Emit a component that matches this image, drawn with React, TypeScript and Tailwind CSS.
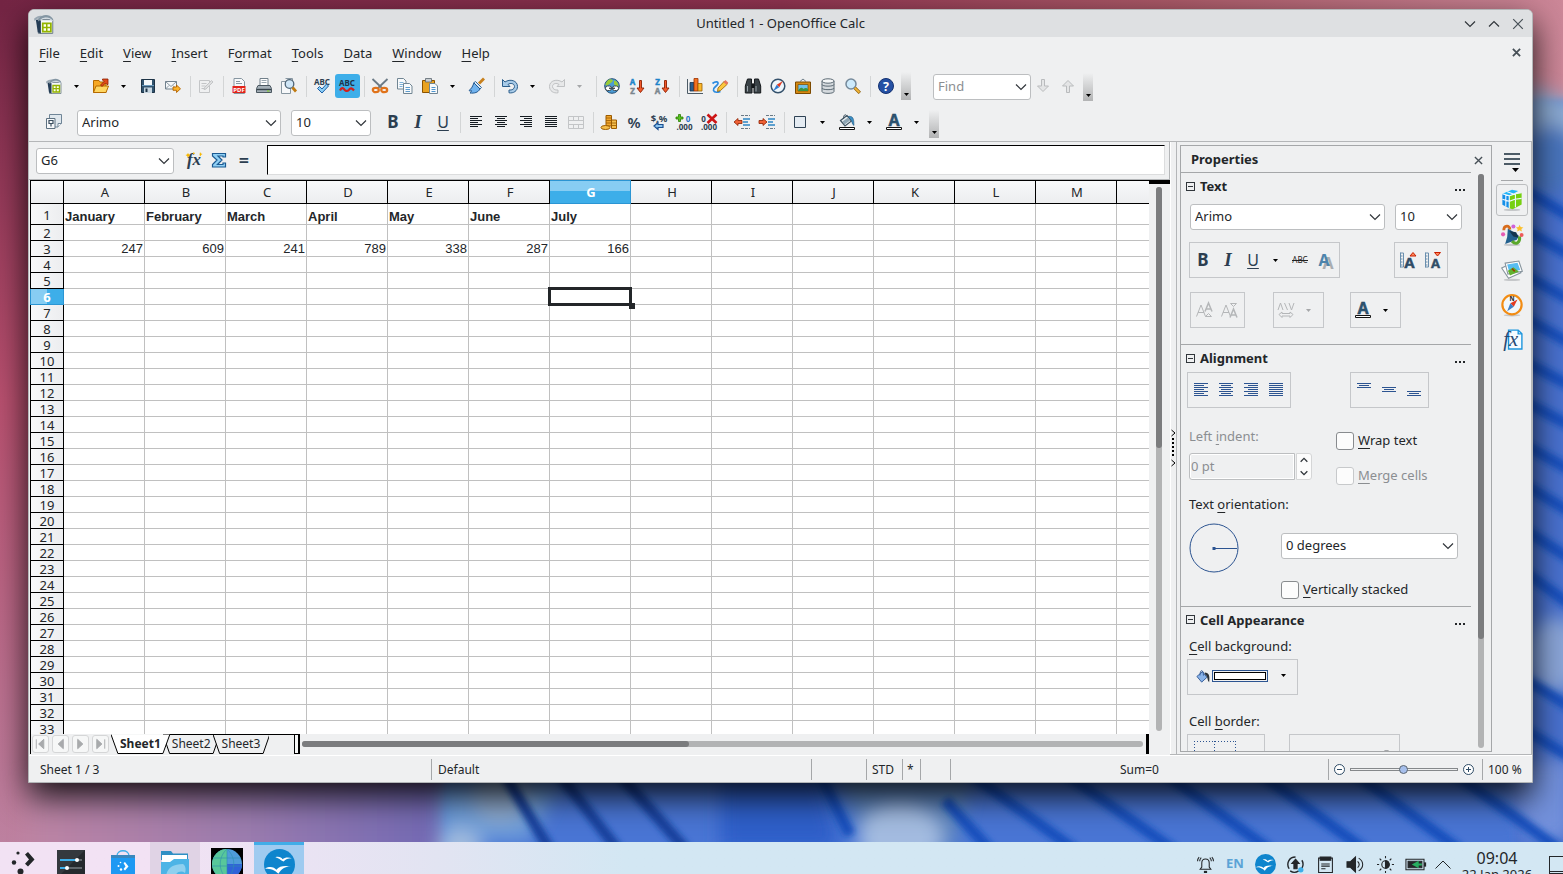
import React from "react";

const COLUMNS = ["A", "B", "C", "D", "E", "F", "G", "H", "I", "J", "K", "L", "M", ""];
const ROWS = Array.from({ length: 33 }, (_, i) => i + 1);

const MONTHS: Record<string, string> = {
  A: "January",
  B: "February",
  C: "March",
  D: "April",
  E: "May",
  F: "June",
  G: "July",
};

const TOTALS: Record<string, number> = { A: 247, B: 609, C: 241, D: 789, E: 338, F: 287, G: 166 };

const MENUS: [string, number][] = [
  ["File", 0],
  ["Edit", 0],
  ["View", 0],
  ["Insert", 0],
  ["Format", 1],
  ["Tools", 0],
  ["Data", 0],
  ["Window", 0],
  ["Help", 0],
];

const GREY = "#b9bbbd";
const INK = "#2c3e50";

const calcDoc = (
  <>
    <path d="M3.500 4.500h11.500v11H3.500z" fill="#f4f7f9" stroke="#6d7d88" strokeWidth=".8" />
    <path d="M1.500 4.500h4v11l-2.500-1z" fill="#243c55" />
    <path d="M0 3.800C3 1 6 .8 8.500 2.500 5 2 3 3.500.5 5.500z" fill="#9aa8b3" />
    <path d="M3 4C7-.2 12-.2 15 3.500v2C11 2.500 7 3 3.500 6z" fill="#8496a3" />
    <path d="M5 5C8 2.500 12 2.500 15 5.500" fill="none" stroke="#e5ecf1" strokeWidth=".8" />
    <path d="M7 7.500h6.500V14H7z" fill="#fdfff0" stroke="#94b400" strokeWidth="1.400" />
    <path d="M10.200 7.500V14M7 10.700h6.500" stroke="#94b400" strokeWidth="1.200" />
  </>
);

const bucket = (
  <>
    <path d="M1.500 6.500L8 1.500l4.500 5.500-6.500 5z" fill="#e7ecef" stroke="#3f5361" strokeWidth="1.200" />
    <path d="M4.500 5C4.500 0 7-.5 8 3" fill="none" stroke="#3f5361" />
    <path d="M9 2.500c5-1 6 2 6 9-2.500-1-1.500-5-4-6.500z" fill="#3b8fc6" stroke="#24506e" strokeWidth=".5" />
    <path d="M3.500 7.500l5.500-4 2 3-5.500 4z" fill="#8fa6b4" />
  </>
);

const ICONS: Record<string, React.ReactNode> = {
  calc: calcDoc,
  open: (
    <>
      <path d="M.5 2.500h5.500l1 1.500h6v10.500H.5z" fill="#f7a823" stroke="#b56a00" />
      <path d="M.5 14.500L3 8h12.500l-2.500 6.500z" fill="#ffd661" stroke="#b56a00" />
      <path d="M7.500 7l3.500-3.500L9.500 2V1H15v5.500h-1L12.500 5 9 8.500z" fill="#e04a1b" stroke="#8d1f00" strokeWidth=".8" />
    </>
  ),
  save: (
    <>
      <path d="M1.500 1.500h13v13h-13z" fill="#31536e" stroke="#1d3346" />
      <path d="M4 2h8v5H4z" fill="#f5f8fa" />
      <path d="M4 9.500h8V15H4z" fill="#c9d8e2" />
      <path d="M5.500 10.500h2V14h-2z" fill="#1d3346" />
      <path d="M2 7.500h12" stroke="#6c9bbd" />
    </>
  ),
  mail: (
    <>
      <path d="M.5 3.500h11v7.500H.5z" fill="#f4f7f9" stroke="#72828e" />
      <path d="M.5 3.500L6 8.500l5.500-5M.5 11L4 7.500M11.500 11L8 7.500" fill="none" stroke="#72828e" strokeWidth=".8" />
      <path d="M8 9h3.500V7l4 3.800-4 3.700v-2.200H8z" fill="#fdb52b" stroke="#b26200" strokeWidth=".9" />
    </>
  ),
  edit: (
    <g stroke="#c3c5c7" fill="none">
      <path d="M1.500 2.500h10v12h-10z" />
      <path d="M3.500 5.500h5M3.500 8h4M3.500 10.500h3" />
      <path d="M13.500 2.500l1.500 1.500-7 7-2 .5.500-2z" fill="#dedfe0" />
    </g>
  ),
  pdf: (
    <>
      <path d="M3 .5h7.500l3 3v12H3z" fill="#f7f9fa" stroke="#8796a1" />
      <path d="M5 3.500h4M5 5.500h6" stroke="#8796a1" />
      <path d="M1.500 8h13v7h-13z" fill="#e2231a" />
      <text x="8" y="13.800" fontSize="6" fontWeight="700" textAnchor="middle" fill="#fff">PDF</text>
    </>
  ),
  print: (
    <>
      <path d="M4 .5h8v7H4z" fill="#fff" stroke="#71808b" />
      <path d="M5.500 2.500h5M5.500 4.500h5" stroke="#9aa7b0" />
      <path d="M2 7.500h12l1.500 3v4H.5v-4z" fill="#a4afb7" stroke="#4b5861" />
      <path d="M1 11.500h14" stroke="#37434b" strokeWidth="1.400" />
      <path d="M11 13h2.500" stroke="#7ed321" />
    </>
  ),
  preview: (
    <>
      <path d="M.5 3.500h9v12h-9z" fill="#f6f8fa" stroke="#8796a1" />
      <path d="M4.500.5h7v5" fill="#fff" stroke="#8796a1" />
      <circle cx="8.500" cy="6" r="4.300" fill="#cfe6f7" stroke="#4f6577" strokeWidth="1.300" />
      <path d="M11.500 9.500l3.500 4" stroke="#c07a10" strokeWidth="2.800" />
    </>
  ),
  spell: (
    <>
      <text x="8" y="6.500" fontSize="8" fontWeight="700" textAnchor="middle" fill={INK}>ABC</text>
      <path d="M3.500 10.500l2-2 2.500 2.500 4.500-5 2 2L8 15z" fill="#8ccdf5" stroke="#1a5fa8" />
    </>
  ),
  autospell: (
    <>
      <text x="8" y="8" fontSize="8" fontWeight="700" textAnchor="middle" fill="#20344a">ABC</text>
      <path d="M1 12.500c1.500-3 3-3 4.500-.8 1.500 1.600 3 1.600 4.500 0 1.500-2.200 3-1.700 5 .8" fill="none" stroke="#d2201c" strokeWidth="2.200" />
    </>
  ),
  cut: (
    <>
      <path d="M.5 1l10 9.500M15.500 1l-10 9.500" stroke="#6b7a86" strokeWidth="1.800" />
      <ellipse cx="3.800" cy="12" rx="3" ry="2.200" fill="#f5f5f5" stroke="#e0731b" strokeWidth="2.200" />
      <ellipse cx="12.200" cy="12" rx="3" ry="2.200" fill="#f5f5f5" stroke="#e0731b" strokeWidth="2.200" />
    </>
  ),
  copy: (
    <g stroke="#708593" fill="#f8fafb">
      <path d="M.5.5h6l2.500 2.500v8H.5z" />
      <path d="M2.500 4.500h4M2.500 6.500h4M2.500 8.500h3" stroke="#7db1d8" />
      <path d="M6.500 5.500h6l2.500 2.500v7.500H6.500z" />
      <path d="M8.500 9.500h4.500M8.500 11.500h4.500M8.500 13.500h4.500" stroke="#5d9cce" />
    </g>
  ),
  paste: (
    <>
      <path d="M.5 2.500h12v12H.5z" fill="#e9a21f" stroke="#8a5200" />
      <path d="M3.500.5h6v3.500h-6z" fill="#c9ced2" stroke="#5b666e" strokeWidth=".8" />
      <path d="M7.500 5.500h5.500l2.500 2.500v7.500h-8z" fill="#f8fafb" stroke="#708593" />
      <path d="M9.500 9.500h4M9.500 11.500h4M9.500 13.500h4" stroke="#4e94cf" />
    </>
  ),
  brush: (
    <>
      <path d="M15 .5L10 5.500" stroke="#c8801d" strokeWidth="2.800" />
      <path d="M6.500 3.500l6 6-1.500 1.500-6.500-6z" fill="#dbe9f5" stroke="#31679c" />
      <path d="M5 5l6 6c-2 3.500-5.500 4.500-10 4 1-1 1.500-1.500 1.500-2.300-1.500.5-2.200.3-2.500-.2C3 10.500 3.500 8 5 5z" fill="#71b3ee" stroke="#21578f" />
    </>
  ),
  undo: (
    <path d="M.5 1.500L3 4C8 .5 15.500 2.500 15.500 8.500c0 4.500-4 7-8.500 6.300v-2.800c3 .4 5.500-1 5.500-3.500 0-3-4-4-6.500-2L8 8.500H.5z" fill="#a8cbe8" stroke="#2d5f8c" />
  ),
  redo: (
    <path d="M15.500 1.500L13 4C8 .5.500 2.500.5 8.500c0 4.500 4 7 8.500 6.300v-2.800c-3 .4-5.500-1-5.500-3.500 0-3 4-4 6.500-2L8 8.500h7.500z" fill="#e7e8e9" stroke="#bfc1c3" />
  ),
  link: (
    <>
      <circle cx="8" cy="8" r="7.300" fill="#4a9bd4" stroke="#245077" />
      <path d="M2.500 4c2-3.500 5-3 6-2S7 5 5.500 6 3 8 1.200 7zM10 2.500c3 0 4.500 3.500 4.500 5.500-2 1-3.500-1-4.500-2z" fill="#9acb36" />
      <rect x="1.500" y="8" width="6" height="4.500" rx="2" fill="#fff" stroke="#3e4c55" />
      <rect x="8.500" y="8" width="6" height="4.500" rx="2" fill="#fff" stroke="#3e4c55" />
      <path d="M5 10.300h6" stroke="#3e4c55" strokeWidth="1.400" />
    </>
  ),
  sortAsc: (
    <>
      <text x="3.500" y="6.500" fontSize="8" fontWeight="700" textAnchor="middle" fill="#1d84c9" stroke="#1d84c9" strokeWidth=".4">A</text>
      <text x="3.500" y="16" fontSize="8" fontWeight="700" textAnchor="middle" fill="#7a868e" stroke="#7a868e" strokeWidth=".4">Z</text>
      <path d="M10.500 2.500h2v7.500H15l-3.500 4.500L8 10h2.500z" fill="#f2592a" stroke="#8d1f00" strokeWidth=".9" />
    </>
  ),
  sortDesc: (
    <>
      <text x="3.500" y="6.500" fontSize="8" fontWeight="700" textAnchor="middle" fill="#1d84c9" stroke="#1d84c9" strokeWidth=".4">Z</text>
      <text x="3.500" y="16" fontSize="8" fontWeight="700" textAnchor="middle" fill="#7a868e" stroke="#7a868e" strokeWidth=".4">A</text>
      <path d="M10.500 2.500h2v7.500H15l-3.500 4.500L8 10h2.500z" fill="#f2592a" stroke="#8d1f00" strokeWidth=".9" />
    </>
  ),
  chart: (
    <>
      <path d="M.5 1v14.500H16" fill="none" stroke="#4c5b66" />
      <path d="M3 4.500h4V13H3z" fill="#2b5d8c" stroke="#17344f" strokeWidth=".8" />
      <path d="M7 .5h4V13H7z" fill="#f4711f" stroke="#9b3100" strokeWidth=".8" />
      <path d="M11 5.500h4V13h-4z" fill="#fbb72c" stroke="#9b6000" strokeWidth=".8" />
    </>
  ),
  draw: (
    <>
      <path d="M.5 5.500c3-2.500 7-2 5 1s-5 3-4 6 5 1.500 7 1" fill="none" stroke="#2c8be0" strokeWidth="1.700" />
      <path d="M12.500 3l3 3-7 6.500-3 1L6 10z" fill="#fcc63d" stroke="#946000" strokeWidth=".8" />
      <path d="M11.500 4L13.500 2l2.800 2.800-2 2z" fill="#e7745f" />
    </>
  ),
  find: (
    <>
      <path d="M2.500 1h4v4l.5 1v9H.3V8zM13.500 1h-4v4L9 6v9h6.700V8z" fill="#3a4247" stroke="#15191c" />
      <path d="M6.500 5.500h3v4.500h-3z" fill="#15191c" />
      <path d="M2.500 8v5.500M11 8v5.500" stroke="#9aa4aa" />
    </>
  ),
  navigator: (
    <>
      <circle cx="8" cy="8" r="6.800" fill="#eef6fc" stroke="#35516b" strokeWidth="1.500" />
      <path d="M12.800 3L9.300 9.300 6.700 6.700z" fill="#e33b22" />
      <path d="M3.200 13l3.500-6.300 2.600 2.600z" fill="#2f7bd0" />
    </>
  ),
  gallery: (
    <>
      <path d="M5 3.500L8 1l3 2.500" fill="none" stroke="#71808b" />
      <path d="M.5 4h15v11.500H.5z" fill="#d58a12" stroke="#7c4a00" />
      <path d="M3 6.500h10v6.500H3z" fill="#6fc1ea" stroke="#7c4a00" strokeWidth=".7" />
      <path d="M3 13c2-4.500 4.500-3.500 5.500-2 1.500-1.500 3.500-1 4.500 0v2z" fill="#3b9442" />
    </>
  ),
  database: (
    <g fill="#d5dade" stroke="#5c6a74">
      <path d="M2 3v10.500c0 2.500 12 2.500 12 0V3" />
      <ellipse cx="8" cy="3" rx="6" ry="2.200" fill="#f5f7f8" />
      <path d="M2 6.500c0 2.200 12 2.200 12 0M2 10c0 2.200 12 2.200 12 0" fill="none" />
    </g>
  ),
  zoom: (
    <>
      <circle cx="6" cy="6" r="5" fill="#cdeafb" stroke="#75899a" strokeWidth="1.500" />
      <path d="M9.800 9.800l5 5" stroke="#8a5a00" strokeWidth="3.200" />
      <path d="M9.800 9.800l4.700 4.700" stroke="#f3b63a" strokeWidth="1.800" />
    </>
  ),
  help: (
    <>
      <circle cx="8" cy="8" r="7.500" fill="#2450a4" stroke="#143170" />
      <text x="8" y="12.500" fontSize="12.500" fontWeight="700" textAnchor="middle" fill="#fff">?</text>
    </>
  ),
  findNext: <path d="M6.500 1.500h3V8h4L8 13.500 2.500 8h4z" fill="#e4e5e6" stroke={GREY} />,
  findPrev: <path d="M6.500 14.500h3V8h4L8 2.500 2.500 8h4z" fill="#e4e5e6" stroke={GREY} />,
  styles: (
    <>
      <path d="M3.500.5h12v9l-3.500 3.500h-8.500z" fill="#dfe7ed" stroke="#6f8597" />
      <path d="M12 13V9.500h3.500" fill="#fff" stroke="#6f8597" />
      <path d="M.5 4.500h8.500v10H.5z" fill="#f6f8fa" stroke="#5d7181" />
      <path d="M3 6.500h4v3H3zM5 9.500v3" fill="none" stroke="#3b4f5f" strokeWidth="1.200" />
    </>
  ),
  merge: (
    <g fill="none" stroke="#c3c5c7">
      <path d="M.5 2.500h15v12H.5zM.5 6.500h15M.5 10.500h15M5.500 2.500v4M10.500 2.500v4M5.500 10.500v4M10.500 10.500v4" />
    </g>
  ),
  currency: (
    <>
      <path d="M5 1.500h5.500V12H5z" fill="#f0a52c" stroke="#9b5b00" />
      <path d="M10.500 6h5v8.500h-5z" fill="#f6bf4c" stroke="#9b5b00" />
      <path d="M5 4h5.500M5 6.500h5.500M5 9h5.500M10.500 9h5M10.500 11.500h5" stroke="#9b5b00" strokeWidth=".8" />
      <ellipse cx="4.500" cy="13.500" rx="4.500" ry="2" fill="#f6bf4c" stroke="#9b5b00" />
    </>
  ),
  numberFormat: (
    <>
      <text x="8" y="7.500" fontSize="9.500" fontWeight="700" textAnchor="middle" fill={INK}>$,%</text>
      <path d="M3 12l4-3.500v2h5v3H7v2z" fill="#8cc4ef" stroke="#1a4f90" strokeWidth="1.200" />
    </>
  ),
  addDecimal: (
    <>
      <path d="M2.500.5h2V3H7v2H4.500v2.500h-2V5H0V3h2.500z" fill="#58c322" stroke="#2b7c00" strokeWidth=".8" />
      <text x="12" y="7.500" fontSize="8" fontWeight="700" textAnchor="middle" fill="#2874c8">0</text>
      <text x="8.500" y="16" fontSize="8" fontWeight="700" textAnchor="middle" fill={INK}>.000</text>
    </>
  ),
  removeDecimal: (
    <>
      <text x="2.500" y="7.500" fontSize="8" fontWeight="700" textAnchor="middle" fill={INK}>0</text>
      <text x="8" y="16" fontSize="8" fontWeight="700" textAnchor="middle" fill={INK}>.000</text>
      <path d="M6.500.5l9 8.500M15.500.5l-9 8.500" stroke="#cc1515" strokeWidth="2.600" />
    </>
  ),
  outdent: (
    <>
      <path d="M7 1.500h9M7 14.500h9" stroke="#6a7a86" strokeDasharray="3 1" />
      <path d="M9 5h7M9 8h5M9 11h7" stroke="#2d85c5" strokeWidth="1.600" />
      <path d="M0 8l4-3.500v2h4v3H4v2z" fill="#ef6236" stroke="#8d1f00" strokeWidth=".8" />
    </>
  ),
  indent: (
    <>
      <path d="M7 1.500h9M7 14.500h9" stroke="#6a7a86" strokeDasharray="3 1" />
      <path d="M9 5h7M9 8h5M9 11h7" stroke="#2d85c5" strokeWidth="1.600" />
      <path d="M8 8L4 4.500v2H0v3h4v2z" fill="#ef6236" stroke="#8d1f00" strokeWidth=".8" />
    </>
  ),
  borders: <path d="M2.500 2.500h11v11h-11z" fill="#e4ebf2" stroke="#2f4254" />,
  background: (
    <>
      {bucket}
      <path d="M.5 13.500h15v2H.5z" fill="#fff" stroke="#111" />
    </>
  ),
  fontColor: (
    <>
      <text x="8" y="11.500" fontSize="16" fontWeight="700" textAnchor="middle" fill="#2d5573" stroke="#1d3a52" strokeWidth=".4">A</text>
      <path d="M.5 13.500h15v2H.5z" fill="#fff" stroke="#111" />
    </>
  ),
  fx: (
    <>
      <text x="8" y="13" fontSize="17" fontStyle="italic" fontWeight="700" textAnchor="middle" fill={INK} fontFamily="Liberation Serif, serif">fx</text>
      <path d="M2 1l1 1.500L4.500 3 3 4l-1 1.500L1 4-.5 3 1 2.500zM7 0l1 1 1-.5-.5 1.500L7 2zM14 0l1 1.500 1.500.5-1.500 1-.5 1.500-1-1.500z" fill="#f7b800" />
    </>
  ),
  sum: <path d="M1.500 1.500h13v3.500H12V4H7l4 4-4.500 4.500h5.500V11h2.500v4h-13v-2.500L6 8 1.500 4z" fill="#8fd0f5" stroke="#1b5a92" strokeWidth="1.200" />,
  strike: (
    <>
      <text x="8" y="11" fontSize="8" textAnchor="middle" fill="#222">ABC</text>
      <path d="M0 8.500h16" stroke="#222" />
    </>
  ),
  grow: (
    <>
      <path d="M.5.500v15M.5 1h3v14h-3M1 4h1.500M1 7h1.500M1 10h1.500M1 13h1.500" fill="none" stroke="#6a8fae" />
      <text x="9.500" y="15.500" fontSize="15" fontWeight="700" textAnchor="middle" fill="#2f4c66" stroke="#2f4c66" strokeWidth=".4">A</text>
      <path d="M10 4l3-3.500L16 4z" fill="#ff8a5c" stroke="#c81e00" />
    </>
  ),
  shrink: (
    <>
      <path d="M.5.500v15M.5 1h3v14h-3M1 4h1.500M1 7h1.500M1 10h1.500M1 13h1.500" fill="none" stroke="#6a8fae" />
      <text x="10.500" y="15.500" fontSize="13" fontWeight="700" textAnchor="middle" fill="#2f4c66" stroke="#2f4c66" strokeWidth=".4">A</text>
      <path d="M9.500.5h6L12.500 4z" fill="#ff8a5c" stroke="#c81e00" />
    </>
  ),
  superscript: (
    <g fill="none" stroke="#b4b6b8">
      <path d="M.5 14.500L5 3l4.500 11.500M2 10.500h6" />
      <path d="M9 9.500L12.500 1 16 9.500M10 7h5" strokeWidth="1.500" />
      <path d="M9.500 14.500l3-3 3 3z" />
    </g>
  ),
  subscript: (
    <g fill="none" stroke="#b4b6b8">
      <path d="M.5 14.500L5 3l4.500 11.500M2 10.500h6" />
      <path d="M9 15.500L12.500 7 16 15.500M10 13h5" strokeWidth="1.500" />
      <path d="M9.500 1.500l3 3 3-3z" />
    </g>
  ),
  spacing: (
    <g fill="none" stroke="#b4b6b8">
      <path d="M0 8l2.500-7L5 8M6.500 1L9.500 8M11 1l2.500 7L16 1M1 12.500L4 10v1.500h8V10l3 2.500L12 15.500v-1.500H4v1.500z" />
    </g>
  ),
  bucketBlue: (
    <>
      <path d="M1 8.500L7.500 3l5 6.500-6 5.500z" fill="#8ab4ea" stroke="#2c5491" />
      <path d="M4.500 7.500c0-7.500 4-7.500 4 0" fill="none" stroke="#2c5491" />
      <path d="M10 4c5 0 6 4 5 11-2.500-2-1-7-5-9z" fill="#2a3138" />
    </>
  ),
  cubes: (
    <>
      <ellipse cx="8" cy="15.200" rx="6" ry=".8" fill="#c5c7c9" />
      <path d="M1 3.500L6 5v9l-5-2.500z" fill="#148fe8" />
      <path d="M1 3.500L8 .5l4.500 1L6 5z" fill="#22b5f7" />
      <path d="M6 5l4-1.500 5-.8v8.500l-6.500 3.500L6 14z" fill="#76d010" />
      <path d="M1 7.500L6 9l4-1.500 5-.7M6 5v9M10.500 3.300v10M1 3.500L6 5l4.500-1.500L15 2.700M4.500 2l4.500 1.700M3.500 4.300v8.400" fill="none" stroke="#eef7ff" strokeWidth=".8" />
    </>
  ),
  stylist: (
    <>
      <ellipse cx="8" cy="15.200" rx="6" ry=".8" fill="#c5c7c9" />
      <path d="M5 3l8 5.500-1.500 3-8.500 3 1.500-5z" fill="#22608e" />
      <path d="M6 5l5 1 2 4-4-1z" fill="#12344f" />
      <path d="M2 4.500c0-3.500 4.500-4 4.500-.5" fill="none" stroke="#d86c1c" strokeWidth="2" />
      <path d="M8 12.500c3 3 6 1 5.500-3.500" fill="none" stroke="#5aa82a" strokeWidth="2.200" />
      <circle cx="9" cy="1.800" r="1.500" fill="#cf62d8" />
      <path d="M13.500.5l.8 1.700 2 .3-1.500 1.200.4 1.800-1.700-.9-1.700.9.300-1.800-1.300-1.200 2-.3z" fill="#fbc02d" />
      <circle cx="1.500" cy="7.500" r="1.500" fill="#e65ab4" />
      <circle cx="15" cy="8" r="1.400" fill="#ee5a5a" />
    </>
  ),
  galleryTab: (
    <>
      <ellipse cx="8" cy="15.200" rx="6" ry=".8" fill="#c5c7c9" />
      <path d="M.5 6.500L10 2l4.500 8-9 4z" fill="#fff" stroke="#88959e" strokeWidth=".8" />
      <path d="M3 3l10-1.500L15.500 9 5 11z" fill="#fff" stroke="#88959e" strokeWidth=".8" />
      <path d="M4.500 4l7.500-1.200L14 8l-8 1.500z" fill="#57bdf2" />
      <path d="M5 8.500l4-2.500 4 3-6.500 3z" fill="#61b22f" />
      <path d="M8 7l2 2" stroke="#9b3c00" strokeWidth="1.200" />
    </>
  ),
  compassTab: (
    <>
      <ellipse cx="8" cy="15.500" rx="6" ry=".8" fill="#c5c7c9" />
      <circle cx="8" cy="7.800" r="7" fill="#f1f8fd" stroke="#f28c13" strokeWidth="1.600" />
      <text x="8" y="5" fontSize="4.500" fontWeight="700" textAnchor="middle" fill="#222">N</text>
      <path d="M12 4L9.300 9.200 6.800 6.700z" fill="#e33b22" />
      <path d="M4.500 12.500l2.300-5.800 2.500 2.500z" fill="#3f7fc4" />
    </>
  ),
  functionsTab: (
    <>
      <path d="M5.500.8h7l2.700 2.700v11H5.500z" fill="#f5fbff" stroke="#1b95dd" />
      <path d="M12.500.8v2.700h2.700" fill="none" stroke="#1b95dd" />
      <text x="7" y="12" fontSize="15" fontStyle="italic" textAnchor="middle" fill="#274a72" fontFamily="Liberation Serif, serif">fx</text>
    </>
  ),
};

const Icon = ({ name, className = "size-4" }: { name: string; className?: string }) => (
  <svg viewBox="0 0 16 16" className={`${className} shrink-0 overflow-visible`} aria-hidden="true">
    {ICONS[name]}
  </svg>
);

const Chevron = ({ className = "size-3" }: { className?: string }) => (
  <svg viewBox="0 0 12 12" className={className} fill="none" stroke="#31363b" strokeWidth="1.200" aria-hidden="true">
    <path d="M1 3.500l5 5 5-5" />
  </svg>
);

// Lines of text at alternating widths, for the alignment buttons
const Lines = ({ kind, large }: { kind: "left" | "center" | "right" | "justify"; large?: boolean }) => {
  const full = large ? 14 : 12;
  return (
    <svg
      viewBox={`0 0 ${full} ${full}`}
      className={large ? "size-3.5" : "size-3"}
      fill={large ? "#2c5491" : "#151c22"}
      aria-hidden="true"
    >
      {Array.from({ length: full / 2 }, (_, i) => {
        const w = kind === "justify" || i % 2 === 0 ? full : full - 4;
        const x = kind === "right" ? full - w : kind === "center" ? (full - w) / 2 : 0;
        return <rect key={i} x={x} y={i * 2} width={w} height="1" />;
      })}
    </svg>
  );
};

const ToolButton = ({ label, children, active }: { label: string; children: React.ReactNode; active?: boolean }) => (
  <button
    type="button"
    aria-label={label}
    className={`flex h-6 w-[25px] shrink-0 items-center justify-center rounded-[3px] pr-px ${active ? "bg-[#3daee9]" : ""}`}
  >
    {children}
  </button>
);

const Tool = ({ icon, active }: { icon: string; active?: boolean }) => (
  <ToolButton label={icon} active={active}>
    <Icon name={icon} />
  </ToolButton>
);

const Arrow = ({ disabled }: { disabled?: boolean }) => (
  <button type="button" aria-label="More options" className="flex h-6 w-[22px] shrink-0 items-center justify-center pr-[3px]">
    <svg viewBox="0 0 5 3" className="h-[3px] w-[5px]" fill={disabled ? "#a5a7a9" : "#000"} aria-hidden="true">
      <path d="M0 0h5L2.500 3z" />
    </svg>
  </button>
);

const Sep = () => <div className="mx-[3px] h-[21px] w-px shrink-0 border-r border-[#d3d5d6] pr-px" />;

const Grip = ({ className = "" }: { className?: string }) => (
  <button
    type="button"
    aria-label="Toolbar options"
    className={`flex h-7 w-2.5 shrink-0 items-end justify-center bg-linear-to-b from-[#eff0f1] to-[#b2b3b4] pb-1 ${className}`}
  >
    <svg viewBox="0 0 5 3" className="h-[3px] w-[5px]" aria-hidden="true">
      <path d="M0 0h5L2.500 3z" />
    </svg>
  </button>
);

const Combo = ({ id, label, value, className, muted }: { id?: string; label?: string; value: string; className: string; muted?: boolean }) => (
  <div className={`relative h-[26px] shrink-0 ${className}`}>
    <select
      id={id}
      aria-label={label}
      defaultValue={value}
      className={`h-full w-full appearance-none rounded-[3px] border border-[#bcbec0] bg-white px-1 ${muted ? "text-[#8b8e91]" : ""}`}
    >
      <option>{value}</option>
    </select>
    <Chevron className="pointer-events-none absolute top-[7px] right-1 size-3" />
  </div>
);

const Mnemonic = ({ text, at }: { text: string; at: number }) => (
  <span className="whitespace-pre">
    {text.slice(0, at)}
    <span className="underline underline-offset-[3px]">{text[at]}</span>
    {text.slice(at + 1)}
  </span>
);

const Close = ({ className }: { className: string }) => (
  <svg viewBox="0 0 10 10" className={className} fill="none" stroke="#475057" aria-hidden="true">
    <path d="M1 1l8 8M9 1L1 9" />
  </svg>
);

const Wallpaper = () => (
  <svg viewBox="0 0 1563 874" preserveAspectRatio="none" className="absolute inset-0 h-full w-full" aria-hidden="true">
    <defs>
      <linearGradient id="top" x1="0" x2="1">
        <stop offset="0" stopColor="#742544" />
        <stop offset=".5" stopColor="#8f3450" />
        <stop offset=".75" stopColor="#ab5a68" />
        <stop offset="1" stopColor="#cc8798" />
      </linearGradient>
      <linearGradient id="left" x1="0" x2="0" y1="0" y2="1">
        <stop offset="0" stopColor="#742544" />
        <stop offset=".45" stopColor="#b8506f" />
        <stop offset="1" stopColor="#bd84a3" />
      </linearGradient>
      <linearGradient id="bottom" x1="0" x2="1">
        <stop offset="0" stopColor="#bd84a3" />
        <stop offset=".5" stopColor="#9a7bae" />
        <stop offset="1" stopColor="#6b66b4" />
      </linearGradient>
      <filter id="soft">
        <feGaussianBlur stdDeviation="3" />
      </filter>
      <filter id="softer">
        <feGaussianBlur stdDeviation="9" />
      </filter>
    </defs>
    <rect width="1563" height="874" fill="url(#top)" />
    <rect y="10" width="60" height="864" fill="url(#left)" />
    <rect x="28" y="775" width="440" height="140" fill="url(#bottom)" filter="url(#softer)" />
    <rect x="445" y="740" width="1140" height="134" fill="#4a74d4" filter="url(#soft)" />
    <rect x="1515" y="100" width="70" height="774" fill="#4a71cf" filter="url(#soft)" />
    <g filter="url(#softer)">
      <path d="M440 780h120l-30 60h-90z" fill="#6f9fda" />
      <circle cx="500" cy="795" r="28" fill="#8ea9cc" />
      <circle cx="460" cy="850" r="22" fill="#9fb9dd" />
      <path d="M720 770h100l20 80h-120z" fill="#2f5ec9" />
      <path d="M835 760h140l-20 90h-90z" fill="#5d86c0" />
      <ellipse cx="900" cy="838" rx="42" ry="34" fill="#a3bbe0" />
      <path d="M1525 85l60 20v60l-60-30z" fill="#8caad2" />
      <circle cx="1550" cy="160" r="34" fill="#4a74bd" />
      <ellipse cx="1555" cy="655" rx="28" ry="38" fill="#8aa5d8" />
      <path d="M1500 760h70v80h-40z" fill="#7391dc" />
    </g>
    <g stroke="#1450bd" strokeWidth="11" filter="url(#soft)">
      <path d="M505 775l45 75M560 775l58 75M620 775l66 75" stroke="#12419c" />
      <path d="M820 775l30 60M945 800l45 50M965 770l110 80M1060 770l114 80M1160 770l110 80M1255 770l110 80M1350 770l110 80M1450 770l110 80" />
      <path d="M1525 190l50 30M1525 230l50 28M1525 275l50 28M1525 318l50 28M1525 362l50 26M1525 402l50 26M1525 445l50 28M1525 485l50 30M1525 530l50 32M1525 572l50 36M1525 680l50 30M1525 730l50 30" />
    </g>
  </svg>
);

const TitleBar = () => (
  <header className="flex h-[27px] items-center rounded-t-[5px] bg-[#dee0e2]">
    <div className="w-20 pl-[5px]">
      <Icon name="calc" className="size-5" />
    </div>
    <h1 className="flex-1 text-center">Untitled 1 - OpenOffice Calc</h1>
    <div className="flex w-20 items-center justify-end gap-3 pr-2">
      <button type="button" aria-label="Minimize"><Chevron /></button>
      <button type="button" aria-label="Maximize"><Chevron className="size-3 rotate-180" /></button>
      <button type="button" aria-label="Close"><Close className="size-3" /></button>
    </div>
  </header>
);

const MenuBar = () => (
  <nav className="flex h-8 items-center pt-0.5">
    {MENUS.map(([name, at]) => (
      <button key={name} type="button" className="px-2.5">
        <Mnemonic text={name} at={at} />
      </button>
    ))}
    <button type="button" aria-label="Close document" className="mr-[11px] ml-auto pb-1">
      <Close className="size-[9px] overflow-visible stroke-2" />
    </button>
  </nav>
);

const FontStyleButtons = () => (
  <>
    <ToolButton label="Bold"><b className="text-[17px] text-[#2c3e50]">B</b></ToolButton>
    <ToolButton label="Italic"><i className="font-['Liberation_Serif',serif] text-[19px] font-bold text-[#2c3e50]">I</i></ToolButton>
    <ToolButton label="Underline"><u className="text-base text-[#2c3e50] underline-offset-2">U</u></ToolButton>
  </>
);

const Toolbars = () => (
  <div className="border-b border-[#b4b6b8]">
    <div className="flex h-[34px] items-center pl-[13px]">
      <Tool icon="calc" />
      <Arrow />
      <Tool icon="open" />
      <Arrow />
      <Tool icon="save" />
      <Tool icon="mail" />
      <Sep />
      <Tool icon="edit" />
      <Sep />
      <Tool icon="pdf" />
      <Tool icon="print" />
      <Tool icon="preview" />
      <Sep />
      <Tool icon="spell" />
      <Tool icon="autospell" active />
      <Sep />
      <Tool icon="cut" />
      <Tool icon="copy" />
      <Tool icon="paste" />
      <Arrow />
      <Tool icon="brush" />
      <Sep />
      <Tool icon="undo" />
      <Arrow />
      <Tool icon="redo" />
      <Arrow disabled />
      <Sep />
      <Tool icon="link" />
      <Tool icon="sortAsc" />
      <Tool icon="sortDesc" />
      <Sep />
      <Tool icon="chart" />
      <Tool icon="draw" />
      <Sep />
      <Tool icon="find" />
      <Tool icon="navigator" />
      <Tool icon="gallery" />
      <Tool icon="database" />
      <Tool icon="zoom" />
      <Sep />
      <Tool icon="help" />
      <Grip className="ml-0.5" />
      <Combo label="Find text" value="Find" className="mt-0.5 ml-[22px] w-[98px]" muted />
      <Tool icon="findNext" />
      <Tool icon="findPrev" />
      <Grip className="mt-0.5 ml-0.5" />
    </div>
    <div className="flex h-[38px] items-center pl-[13px]">
      <Tool icon="styles" />
      <Combo label="Font name" value="Arimo" className="mt-0.5 mr-2.5 ml-2.5 w-[204px]" />
      <Combo label="Font size" value="10" className="mt-0.5 mr-2.5 w-20" />
      <FontStyleButtons />
      <Sep />
      <ToolButton label="Align left"><Lines kind="left" /></ToolButton>
      <ToolButton label="Center"><Lines kind="center" /></ToolButton>
      <ToolButton label="Align right"><Lines kind="right" /></ToolButton>
      <ToolButton label="Justify"><Lines kind="justify" /></ToolButton>
      <Tool icon="merge" />
      <Sep />
      <Tool icon="currency" />
      <ToolButton label="Percent"><span className="text-[15px] font-semibold text-[#2c3e50]">%</span></ToolButton>
      <Tool icon="numberFormat" />
      <Tool icon="addDecimal" />
      <Tool icon="removeDecimal" />
      <Sep />
      <Tool icon="outdent" />
      <Tool icon="indent" />
      <Sep />
      <Tool icon="borders" />
      <Arrow />
      <Tool icon="background" />
      <Arrow />
      <Tool icon="fontColor" />
      <Arrow />
      <Grip className="mt-1" />
    </div>
  </div>
);

const FormulaBar = () => (
  <div className="flex h-[38px] items-center border-r border-b border-[#b4b6b8] pb-px pl-[7px]">
    <Combo label="Name box" value="G6" className="mt-0.5 mr-2 w-[138px]" />
    <Tool icon="fx" />
    <Tool icon="sum" />
    <ToolButton label="Function"><span className="text-lg font-semibold text-[#2c3e50]">=</span></ToolButton>
    <input
      aria-label="Formula"
      className="mr-1 ml-2.5 h-[30px] min-w-0 flex-1 border-t border-r border-b border-l border-t-black border-r-[#dcddde] border-b-[#dcddde] border-l-black bg-white px-1"
    />
  </div>
);

const SheetGrid = () => (
  <div className="min-h-0 min-w-0 flex-1 overflow-hidden bg-white">
    <table className="w-max table-fixed border-separate border-spacing-0">
      <colgroup>
        <col className="w-[34px]" />
        {COLUMNS.map((c) => <col key={c} className="w-[81px]" />)}
      </colgroup>
      <thead>
        <tr className="h-6">
          <td className="w-[34px] border border-black bg-linear-to-b from-[#f8f9fa] to-[#ecedef] p-0" />
          {COLUMNS.map((c) => (
            <th
              key={c}
              scope="col"
              className={
                c === "G"
                  ? "w-[81px] border-y border-r border-y-[#2b95d3] border-r-[#2b95d3] bg-linear-to-b from-[#87cdf3] from-45% to-[#3daee9] to-45% bg-origin-border p-0 pl-0.5 leading-[18px] font-bold text-white"
                  : "w-[81px] border-y border-r border-black bg-linear-to-b from-[#f8f9fa] to-[#ecedef] p-0 pl-0.5 leading-[18px] font-normal"
              }
            >
              {c}
            </th>
          ))}
        </tr>
      </thead>
      <tbody>
        {ROWS.map((r) => (
          <tr key={r} className={r === 1 ? "h-[21px]" : "h-4"}>
            <th
              scope="row"
              className={
                r === 6
                  ? "border-x border-b border-x-[#2b95d3] border-b-[#2b95d3] bg-linear-to-r from-[#87cdf3] from-50% to-[#3daee9] to-50% p-0 pt-0.5 leading-[13px] font-bold text-white"
                  : "border-x border-b border-black bg-linear-to-r from-[#f8f9fa] to-[#ecedef] p-0 pt-0.5 leading-[13px] font-normal"
              }
            >
              {r}
            </th>
            {COLUMNS.map((c) => (
              <td
                key={c}
                className="relative border-r border-b border-[#c0c0c0] p-0 px-px align-bottom font-['Liberation_Sans',Arial,sans-serif] leading-[15px]"
              >
                {r === 1 && <b>{MONTHS[c]}</b>}
                {r === 3 && <div className="text-right">{TOTALS[c]}</div>}
                {r === 6 && c === "G" && (
                  <div className="absolute -inset-0.5 z-10 border-3 border-[#232629]">
                    <div className="absolute -right-1.5 -bottom-1.5 size-1.5 bg-[#232629]" />
                  </div>
                )}
              </td>
            ))}
          </tr>
        ))}
      </tbody>
    </table>
  </div>
);

const NAV_PATHS = [
  "M3.500 3v10M11.500 3v10L6 8z",
  "M11 3v10L5.500 8z",
  "M5 3v10l5.500-5z",
  "M4 3v10l5.500-5zM12.500 3v10",
];

const SheetTab = ({ name, active }: { name: string; active?: boolean }) => (
  <button type="button" className={`relative -ml-[7px] h-5 shrink-0 px-[9px] text-xs ${active ? "z-10 font-bold" : ""}`}>
    <svg viewBox="0 0 60 20" preserveAspectRatio="none" className="absolute inset-0 h-full w-full" aria-hidden="true">
      <path
        d="M0 .5l7 19h46l7-19"
        fill={active ? "#fff" : "#eff0f1"}
        stroke="#000"
        vectorEffect="non-scaling-stroke"
      />
      {!active && <path d="M0 .5h60" stroke="#000" vectorEffect="non-scaling-stroke" />}
    </svg>
    <span className="relative">{name}</span>
  </button>
);

const TabRow = () => (
  <div className="flex h-[21px] items-start bg-[#eff0f1]">
    <div className="flex h-5 items-center gap-[3px] border-l border-black pl-px">
      {NAV_PATHS.map((d) => (
        <button key={d} type="button" aria-label="Scroll sheets" className="h-[18px] w-[17px] rounded-[3px] border border-[#d5d6d7] bg-[#f6f7f7]">
          <svg viewBox="0 0 16 16" className="size-full" fill="#a8aaac" stroke="#a8aaac" aria-hidden="true">
            <path d={d} />
          </svg>
        </button>
      ))}
    </div>
    <div className="flex pl-[9px]">
      <SheetTab name="Sheet1" active />
      <SheetTab name="Sheet2" />
      <SheetTab name="Sheet3" />
    </div>
    <div className="h-5 w-[25px] border-t border-black" />
    <div className="h-5 w-1.5 border border-r-2 border-black bg-[#f6f7f7]" />
    <div className="flex h-5 flex-1 items-center pr-[3px] pl-0.5">
      <div className="h-1.5 flex-1 rounded-full bg-[#b2b3b4]">
        <div className="h-full w-[46%] rounded-full bg-[#7b7c7e]" />
      </div>
    </div>
    <div className="h-5 w-[3px] bg-black" />
  </div>
);

const Sheet = () => (
  <main className="flex min-w-0 flex-1 flex-col">
    <FormulaBar />
    <div className="flex min-h-0 flex-1 pl-px">
      <div className="flex min-w-0 flex-1 flex-col">
        <SheetGrid />
        <TabRow />
      </div>
      <div className="flex w-[21px] shrink-0 flex-col items-center border-t-4 border-black pt-[3px] pr-px pb-6">
        <div className="w-1.5 flex-1 rounded-full bg-[#b2b3b4]">
          <div className="h-[48%] rounded-full bg-[#7b7c7e]" />
        </div>
      </div>
    </div>
  </main>
);

const Section = ({ title, children }: { title: string; children: React.ReactNode }) => (
  <section className="border-t border-[#a5a7a9]">
    <div className="flex h-[26px] items-center pr-1.5 pl-[5px]">
      <button type="button" aria-label={`Collapse ${title}`} className="flex size-[9px] items-center justify-center border border-[#31363b]">
        <span className="h-px w-[5px] bg-[#31363b]" />
      </button>
      <h3 className="ml-[5px] pt-0.5 font-bold">{title}</h3>
      <button type="button" aria-label={`More ${title} options`} className="mt-2 ml-auto flex gap-0.5">
        <span className="size-0.5 bg-[#232629]" />
        <span className="size-0.5 bg-[#232629]" />
        <span className="size-0.5 bg-[#232629]" />
      </button>
    </div>
    {children}
  </section>
);

const Group = ({ children, className = "" }: { children: React.ReactNode; className?: string }) => (
  <div className={`flex h-9 items-center border border-[#c5c7ca] ${className}`}>{children}</div>
);

const Check = ({ id, text, disabled }: { id: string; text: string; disabled?: boolean }) => (
  <div className="flex h-5 items-center gap-1">
    <input
      id={id}
      type="checkbox"
      disabled={disabled}
      className="size-[18px] appearance-none rounded-[3px] border border-[#888b8e] bg-[#fcfcfc] disabled:border-[#c7c9cb]"
    />
    <label htmlFor={id} className={disabled ? "text-[#8b8e91]" : ""}>
      <Mnemonic text={text} at={0} />
    </label>
  </div>
);

const VAlign = ({ y }: { y: number }) => (
  <svg viewBox="0 0 14 14" className="size-3.5" fill="#2c5491" aria-hidden="true">
    <rect x="0" y={y} width="14" height="1" />
    <rect x="2" y={y + 2} width="10" height="1" />
    <rect x="0" y={y + 4} width="14" height="1" />
  </svg>
);

const Properties = () => (
  <div className="flex min-w-0 flex-1 flex-col border border-[#a5a7a9]">
    <div className="flex h-[26px] shrink-0 items-center justify-between pt-0.5 pr-2 pl-2.5">
      <h2 className="font-bold">Properties</h2>
      <button type="button" aria-label="Close sidebar" className="pt-px">
        <Close className="size-[9px] overflow-visible stroke-[1.500px]" />
      </button>
    </div>
    <div className="flex min-h-0 flex-1">
      <div className="min-w-0 flex-1 overflow-hidden">
        <Section title="Text">
          <div className="flex gap-2.5 pt-[5px] pl-[9px]">
            <Combo label="Sidebar font name" value="Arimo" className="w-[195px]" />
            <Combo label="Sidebar font size" value="10" className="w-[67px]" />
          </div>
          <div className="flex gap-[54px] pt-3 pl-2">
            <Group className="w-[151px] pl-px">
              <FontStyleButtons />
              <Arrow />
              <Tool icon="strike" />
              <ToolButton label="Shadow">
                <span className="pr-0.5 text-base font-bold text-[#4d84ab] [text-shadow:4px_3px_0_#a9adb1]">A</span>
              </ToolButton>
            </Group>
            <Group className="w-[54px] justify-center">
              <Tool icon="grow" />
              <Tool icon="shrink" />
            </Group>
          </div>
          <div className="flex pt-3.5 pb-4 pl-[9px]">
            <Group className="mr-7 w-[55px] pl-px">
              <Tool icon="superscript" />
              <Tool icon="subscript" />
            </Group>
            <Group className="mr-[26px] w-[51px]">
              <Tool icon="spacing" />
              <Arrow disabled />
            </Group>
            <Group className="w-[51px]">
              <Tool icon="fontColor" />
              <Arrow />
            </Group>
          </div>
        </Section>
        <Section title="Alignment">
          <div className="flex gap-[59px] pt-px pl-1.5">
            <Group className="w-[104px] justify-center">
              <ToolButton label="Align left"><Lines kind="left" large /></ToolButton>
              <ToolButton label="Center"><Lines kind="center" large /></ToolButton>
              <ToolButton label="Align right"><Lines kind="right" large /></ToolButton>
              <ToolButton label="Justify"><Lines kind="justify" large /></ToolButton>
            </Group>
            <Group className="w-[79px] justify-center">
              <ToolButton label="Align top"><VAlign y={0} /></ToolButton>
              <ToolButton label="Align middle"><VAlign y={4} /></ToolButton>
              <ToolButton label="Align bottom"><VAlign y={8} /></ToolButton>
            </Group>
          </div>
          <div className="flex gap-6 pt-[18px] pl-2">
            <div>
              <label htmlFor="indent" className="block leading-5 text-[#8b8e91]">
                <Mnemonic text="Left indent:" at={5} />
              </label>
              <div className="mt-[7px] flex h-[27px] gap-px">
                <input
                  id="indent"
                  defaultValue="0 pt"
                  disabled
                  className="w-[106px] rounded-l-[3px] border border-[#bcbec0] bg-[#eff0f1] px-px text-[#8b8e91] ring-1 ring-white ring-inset"
                />
                <div className="flex w-4 flex-col items-center justify-around rounded-r-[3px] border border-[#d5d6d7] bg-[#fcfcfc]">
                  <button type="button" aria-label="Increase"><Chevron className="size-2 rotate-180 stroke-2" /></button>
                  <button type="button" aria-label="Decrease"><Chevron className="size-2 stroke-2" /></button>
                </div>
              </div>
            </div>
            <div className="flex flex-col gap-[15px] pt-[5px]">
              <Check id="wrap" text="Wrap text" />
              <Check id="merge" text="Merge cells" disabled />
            </div>
          </div>
          <div className="pt-2 pb-1.5 pl-2">
            <label htmlFor="orientation" className="leading-5">
              <Mnemonic text="Text orientation:" at={5} />
            </label>
            <div className="flex gap-[42px]">
              <svg viewBox="0 0 50 50" className="mt-2 size-[50px]" fill="none" stroke="#2c5491" aria-hidden="true">
                <circle cx="25" cy="25" r="24" />
                <path d="M25 25.500h23" />
                <path d="M23.500 24h3v3h-3z" fill="#2c5491" stroke="none" />
              </svg>
              <div className="pt-[18px]">
                <Combo id="orientation" value="0 degrees" className="w-[177px]" />
                <div className="pt-[21px]">
                  <Check id="stacked" text="Vertically stacked" />
                </div>
              </div>
            </div>
          </div>
        </Section>
        <Section title="Cell Appearance">
          <div className="pt-[3px] pl-2 leading-5">
            <Mnemonic text="Cell background:" at={0} />
          </div>
          <div className="pt-[3px] pl-1.5">
            <Group className="w-[111px] pb-0.5 pl-2">
              <button type="button" aria-label="Cell background" className="flex items-center">
                <Icon name="bucketBlue" className="size-3.5" />
                <span className="ml-0.5 h-3 w-14 border border-[#2c5491] p-px">
                  <span className="block h-full border border-black bg-white" />
                </span>
              </button>
              <div className="ml-1.5"><Arrow /></div>
            </Group>
          </div>
          <div className="pt-4 pl-2 leading-5">
            <Mnemonic text="Cell border:" at={5} />
          </div>
          <div className="flex gap-6 pt-[3px] pl-1.5">
            <Group className="w-[78px] pl-1.5">
              <svg viewBox="0 0 42 22" className="h-[22px] w-[42px]" fill="none" stroke="#2c5491" strokeDasharray="1 2" aria-hidden="true">
                <path d="M0 .5h42M.5 0v22M20.500 0v22M41.500 0v22" />
              </svg>
            </Group>
            <Group className="w-[111px] justify-end">
              <Arrow disabled />
            </Group>
          </div>
        </Section>
      </div>
      <div className="flex w-5 shrink-0 flex-col items-center pt-0.5 pb-[3px]">
        <div className="w-1.5 flex-1 rounded-full bg-[#b2b3b4]">
          <div className="h-[81%] rounded-full bg-[#7b7c7e]" />
        </div>
      </div>
    </div>
  </div>
);

const Sidebar = () => (
  <aside className="flex w-[362px] shrink-0 border-b border-[#b4b6b8]">
    <div className="flex w-1.5 items-center justify-center border-l border-white">
      <svg viewBox="0 0 5 38" className="h-[38px] w-[5px]" fill="none" stroke="#000" aria-hidden="true">
        <path d="M.5 1l3.500 3-3.500 3M.5 31L4 34l-3.500 3" />
        <path d="M2 9v20" strokeWidth="2" strokeDasharray="2 2" />
      </svg>
    </div>
    <div className="flex min-w-0 flex-1 border-x border-[#b4b6b8] pt-[3px] pb-0.5 pl-[3px]">
      <Properties />
      <div className="flex w-[39px] shrink-0 flex-col items-center pt-2">
        <button type="button" aria-label="Sidebar settings" className="flex h-5 w-4 flex-col gap-[3px]">
          <span className="h-0.5 w-full bg-[#4c5b66]" />
          <span className="h-0.5 w-full bg-[#4c5b66]" />
          <span className="h-0.5 w-full bg-[#4c5b66]" />
          <svg viewBox="0 0 7 4" className="ml-2 h-1 w-[7px]" aria-hidden="true"><path d="M0 0h7L3.500 4z" /></svg>
        </button>
        <div className="mt-[7px] mb-[3px] h-px w-[22px] bg-[#a5a7a9]" />
        <button type="button" aria-label="Properties" className="flex h-8 w-8 items-center justify-center rounded-[3px] border border-[#bcbec0]">
          <Icon name="cubes" className="size-[22px]" />
        </button>
        {["stylist", "galleryTab", "compassTab", "functionsTab"].map((name) => (
          <button key={name} type="button" aria-label={name} className="mt-[3px] flex h-8 w-8 items-center justify-center">
            <Icon name={name} className="size-[22px]" />
          </button>
        ))}
      </div>
    </div>
  </aside>
);

const StatusBar = () => (
  <footer className="flex h-[27px] shrink-0 items-center border-t border-white pt-px text-xs [&>div]:flex [&>div]:h-[21px] [&>div]:items-center [&>div+div]:border-l [&>div+div]:border-[#a5a7a9]">
    <div className="w-[402px] pl-[11px]">Sheet 1 / 3</div>
    <div className="w-[380px] pl-1.5">Default</div>
    <div className="w-[55px]" />
    <div className="w-9 pl-[5px]">STD</div>
    <div className="w-[18px] pl-1">*</div>
    <div className="w-[30px]" />
    <div className="flex-1 justify-center">Sum=0</div>
    <div className="w-[154px] gap-[5px] pl-[5px]">
      <button type="button" aria-label="Zoom out">
        <svg viewBox="0 0 11 11" className="size-[11px]" fill="#fff" stroke="#2f4c66" aria-hidden="true">
          <circle cx="5.500" cy="5.500" r="5" />
          <path d="M3 5.500h5" />
        </svg>
      </button>
      <input
        type="range"
        aria-label="Zoom"
        defaultValue={49}
        className="h-[3px] w-[108px] appearance-none border border-[#85888b] bg-[#eff0f1] [&::-webkit-slider-thumb]:size-[9px] [&::-webkit-slider-thumb]:appearance-none [&::-webkit-slider-thumb]:rounded-full [&::-webkit-slider-thumb]:border [&::-webkit-slider-thumb]:border-[#5c6670] [&::-webkit-slider-thumb]:bg-[#a6bfec]"
      />
      <button type="button" aria-label="Zoom in">
        <svg viewBox="0 0 11 11" className="size-[11px]" fill="#fff" stroke="#2f4c66" aria-hidden="true">
          <circle cx="5.500" cy="5.500" r="5" />
          <path d="M3 5.500h5M5.500 3v5" />
        </svg>
      </button>
    </div>
    <div className="w-[50px] pl-[5px] whitespace-nowrap">100 %</div>
  </footer>
);

const Gulls = ({ className }: { className: string }) => (
  <svg viewBox="0 0 30 30" className={className} aria-hidden="true">
    <circle cx="15" cy="15" r="15" fill="#0e85cd" />
    <path d="M11 8c3-1 6 0 7 2 2-2 6-2 9-1-4 0-6 1-8 3-3-1-4-3-8-4z" fill="#fff" />
    <path d="M1 19c5-3 9-1 11 1 3-4 9-4 14-3-6 0-9 2-12 7-4-4-7-5-13-5z" fill="#fff" />
  </svg>
);

const Tray = ({ label, children }: { label: string; children: React.ReactNode }) => (
  <button type="button" aria-label={label} className="flex h-11 w-[30px] items-center justify-center">
    <svg viewBox="0 0 16 16" className="size-[17px] overflow-visible" fill="none" stroke="#232629" aria-hidden="true">
      {children}
    </svg>
  </button>
);

const Taskbar = () => (
  <div className="relative flex h-8 shrink-0 items-start overflow-hidden bg-linear-to-r from-[#f2e2f4] from-10% via-[#e2e4f2] via-28% to-[#d3e7f3] to-40%">
    <button type="button" aria-label="Application launcher" className="flex h-10 w-[45px] items-center justify-center">
      <svg viewBox="0 0 24 24" className="size-6" fill="#232629" aria-hidden="true">
        <circle cx="7" cy="3" r="1.600" />
        <circle cx="3" cy="12.500" r="2.200" />
        <circle cx="9.500" cy="21.500" r="3" />
        <path d="M14 4.500l3-2.500 6.500 7.500-6.500 7-3-2.700L18 9.500z" />
      </svg>
    </button>
    <button type="button" aria-label="System settings" className="flex h-11 w-[52px] items-center justify-center">
      <svg viewBox="0 0 28 28" className="size-7" aria-hidden="true">
        <rect width="28" height="28" fill="#34393e" />
        <path d="M0 28L28 0v28z" fill="#25292d" />
        <path d="M3 10h17M3 18h7" stroke="#3daee9" strokeWidth="2" />
        <path d="M20 10h5M10 18h15" stroke="#60666b" strokeWidth="2" />
        <circle cx="20" cy="10" r="2" fill="#fff" />
        <circle cx="10" cy="18" r="2" fill="#fff" />
      </svg>
    </button>
    <button type="button" aria-label="Discover" className="flex h-11 w-[52px] items-center justify-center">
      <svg viewBox="0 0 28 28" className="size-7" aria-hidden="true">
        <path d="M8 6c0-7 12-7 12 0" fill="none" stroke="#3daee9" strokeWidth="1.300" />
        <path d="M2 6h24v22H2z" fill="#1d99f3" />
        <path d="M2 5h24v3H2z" fill="#3a87bd" />
        <path d="M14.500 13l1.500-1 3.500 4.500-3.500 4-1.500-1.500 2-2.500z" fill="#fff" />
        <circle cx="11.500" cy="12.500" r=".8" fill="#fff" />
        <circle cx="9.500" cy="16" r="1" fill="#fff" />
        <circle cx="12" cy="19.500" r="1.200" fill="#fff" />
      </svg>
    </button>
    <button type="button" aria-label="Files" className="ml-px flex h-11 w-[50px] items-center justify-center bg-[#e0d3e5]">
      <svg viewBox="0 0 28 28" className="size-7" aria-hidden="true">
        <path d="M0 1h10l2 2.500h15V10H0z" fill="#2f8fc4" />
        <path d="M1 5h25v8H1z" fill="#fff" />
        <path d="M0 28V12h9l4-3h15v19z" fill="#4db4e6" />
        <path d="M5 28c0-9 6-14 17-14 3 2 3 6 2 9-4-3-9-1-11 5z" fill="#8fd0ef" />
      </svg>
    </button>
    <button type="button" aria-label="Browser" className="flex h-11 w-[54px] items-center justify-center">
      <svg viewBox="0 0 32 32" className="size-8" aria-hidden="true">
        <rect width="32" height="32" />
        <circle cx="16" cy="16" r="15" fill="#4f9bd9" />
        <path d="M16 1a15 15 0 000 30z" fill="#58c79a" />
        <path d="M16 16h15a15 15 0 01-15 15z" fill="#2f62d8" />
        <path d="M16 1v30M2 10h28M1 18h30M16 1c-9 8-9 22 0 30M16 1c9 8 9 22 0 30" fill="none" stroke="#2d8fb0" strokeWidth=".6" />
      </svg>
    </button>
    <button type="button" aria-label="OpenOffice Calc" className="flex h-11 w-[50px] items-center justify-center border-t-3 border-[#41ade8] bg-[#9fcbf0] pb-[3px]">
      <Gulls className="size-[31px]" />
    </button>
    <div className="ml-auto flex">
      <Tray label="Notifications">
        <path d="M3 12.500h10l-1.500-2V6.500c0-5-7-5-7 0v4zM2.500 5c0-1.500.5-2.500 1.500-3.500M13.500 5c0-1.500-.5-2.500-1.500-3.500M.5 5c0-2 .5-3 1.500-4M15.500 5c0-2-.5-3-1.500-4" />
        <path d="M6.500 15h3" strokeWidth="2" />
      </Tray>
      <button type="button" className="flex h-11 w-[30px] items-center justify-center font-bold text-[#5ba3d6]">EN</button>
      <button type="button" aria-label="OpenOffice quickstarter" className="flex h-11 w-[30px] items-center justify-center">
        <Gulls className="size-[21px]" />
      </button>
      <Tray label="Updates">
        <path d="M2 12C-1 7 2 1 8 1M14 4c2 3 1 7-1 9M3 14c2 1.500 5 2 8 0" strokeWidth="1.300" />
        <path d="M8 3l3.500 4H9.500v5h-3V7H4.500z" fill="#232629" />
        <circle cx="13" cy="13" r="2.500" fill="#3daee9" stroke="none" />
      </Tray>
      <Tray label="Clipboard">
        <path d="M1.500 2h13v13.500h-13zM4 7.500h8M4 9.500h8M4 12h4" />
        <path d="M3 1h10v3H3z" fill="#232629" />
      </Tray>
      <Tray label="Volume">
        <path d="M0 5.500h3L8 1v14l-5-4.500H0z" fill="#232629" />
        <path d="M10 5c2 2 2 4 0 6M11 2c5 3 5 9 0 12" />
      </Tray>
      <Tray label="Brightness">
        <circle cx="8" cy="8" r="3.500" />
        <path d="M8 4.500a3.500 3.500 0 010 7z" fill="#232629" />
        <path d="M8 0v2M8 14v2M0 8h2M14 8h2M2.500 2.500L4 4M12 12l1.500 1.500M13.500 2.500L12 4M4 12l-1.500 1.500" />
      </Tray>
      <Tray label="Battery">
        <path d="M-1 3h17v10H-1z" />
        <path d="M17 6v4" strokeWidth="2" />
        <path d="M1 5h13v6H1z" fill="#232629" />
        <path d="M11 4.500L4.500 8l6.500 3.500V9h3V7h-3z" fill="#27ae60" stroke="none" />
      </Tray>
      <button type="button" aria-label="Show hidden icons" className="flex h-11 w-[26px] items-center justify-center">
        <svg viewBox="0 0 16 9" className="h-[9px] w-4" fill="none" stroke="#232629" aria-hidden="true"><path d="M.5 8.500L8 1l7.500 7.500" /></svg>
      </button>
      <div className="w-[82px] pt-2 text-center">
        <div className="text-base leading-4">09:04</div>
        <div className="leading-4 whitespace-nowrap">22 Jan 2026</div>
      </div>
      <button type="button" aria-label="Peek at desktop" className="mt-3.5 ml-[11px] h-[18px] w-3.5 border border-r-0 border-[#232629] pt-3">
        <span className="block h-px bg-[#232629]" />
      </button>
    </div>
  </div>
);

export default function App() {
  return (
    <div className="relative flex h-screen flex-col overflow-hidden font-['Noto_Sans',sans-serif] text-[13px] text-[#232629]">
      <Wallpaper />
      <div className="relative flex min-h-0 flex-1 pt-[9px] pr-[30px] pb-[59px] pl-7">
        <div className="flex min-w-0 flex-1 flex-col rounded-t-[6px] border border-[#b3b6b8] bg-[#eff0f1] shadow-[0_14px_32px_rgba(0,0,0,0.85)]">
          <TitleBar />
          <MenuBar />
          <Toolbars />
          <div className="flex min-h-0 flex-1">
            <Sheet />
            <Sidebar />
          </div>
          <StatusBar />
        </div>
      </div>
      <Taskbar />
    </div>
  );
}
